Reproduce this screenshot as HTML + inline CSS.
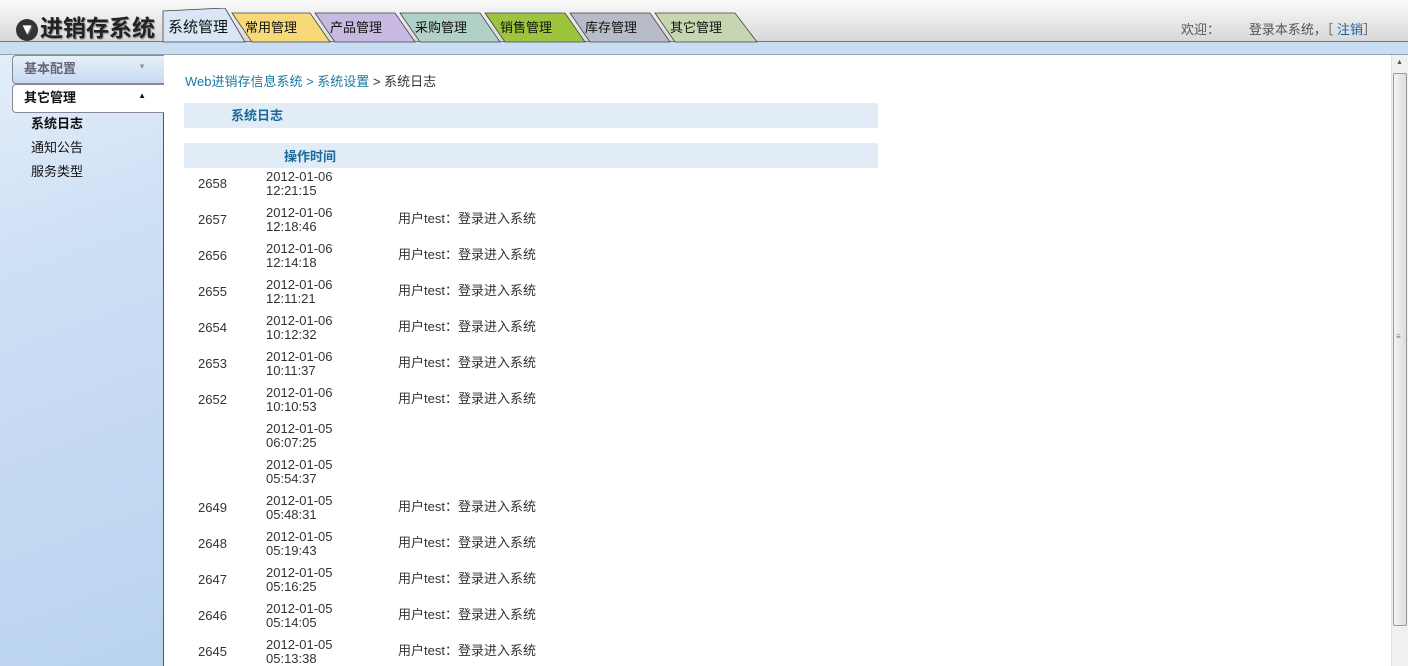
<!DOCTYPE html>
<html><head><meta charset="utf-8"><style>
*{margin:0;padding:0;box-sizing:border-box}
body{width:1408px;height:666px;overflow:hidden;font-family:"Liberation Sans","Noto Sans CJK SC",sans-serif;font-size:13px;color:#333;background:#fff;position:relative}
#top{position:absolute;left:0;top:0;width:1408px;height:42px;background:linear-gradient(#fafafa,#d8d8d8);border-bottom:1px solid #777}
#strip{position:absolute;left:0;top:42px;width:1408px;height:13px;background:#c9def3;border-bottom:1px solid #8aa}
#logo{position:absolute;left:16px;top:9px;font-size:23px;font-weight:bold;color:#222;text-shadow:1px 1px 1px #888}
#logo span{display:inline-block;width:22px;height:22px;border-radius:50%;background:#333;color:#fff;font-size:15px;text-align:center;line-height:22px;vertical-align:2px;margin-right:2px}
.tab{position:absolute;font-size:13px;color:#111}
#welcome{position:absolute;left:1181px;top:19px;font-size:13px;color:#555}
#welcome a{color:#1a5fa0}
#side{position:absolute;left:0;top:55px;width:164px;height:611px;background:linear-gradient(160deg,#e4eefa 0%,#cfe0f5 30%,#b9d3ef 100%);border-right:1px solid #555}
.sh{position:absolute;left:12px;width:152px;height:29px;border:1px solid #889;border-right:none;border-radius:4px 0 0 4px;font-weight:bold;font-size:13px;padding:2px 11px}
.si{position:absolute;left:31px;font-size:13px;color:#111}
#content{position:absolute;left:185px;top:71px}
.bar{position:absolute;left:184px;width:694px;background:#e2ecf7}
.r{position:absolute;font-size:13px;color:#333}
#sb{position:absolute;left:1391px;top:55px;width:17px;height:611px;background:#f0f0f0;border-left:1px solid #ddd}
#sb .th{position:absolute;left:1px;top:18px;width:14px;height:553px;background:linear-gradient(90deg,#f4f4f4,#dcdcdc);border:1px solid #999;border-radius:2px}
</style></head><body>
<div id="top"></div>
<div id="strip"></div>
<div id="logo"><span>▼</span>进销存系统</div>
<svg style="position:absolute;left:160px;top:8px" width="600" height="35">
<polygon points="72,5 150,5 170,34 92,34" fill="#f7d979" stroke="#444" stroke-width="0.8"/>
<polygon points="155,5 235,5 255,34 175,34" fill="#c8b9e2" stroke="#444" stroke-width="0.8"/>
<polygon points="240,5 320,5 340,34 260,34" fill="#b0d0c8" stroke="#444" stroke-width="0.8"/>
<polygon points="325,5 405,5 425,34 345,34" fill="#9cc43c" stroke="#444" stroke-width="0.8"/>
<polygon points="410,5 490,5 510,34 430,34" fill="#b8bcc8" stroke="#444" stroke-width="0.8"/>
<polygon points="495,5 575,5 597,34 515,34" fill="#c6d6b0" stroke="#444" stroke-width="0.8"/>
<polygon points="3,34 3,3 65,0 85,34" fill="#d8e6f5" stroke="#444" stroke-width="0.8"/>
</svg>
<div class="tab" style="left:168px;top:16px;font-size:15px">系统管理</div>
<div class="tab" style="left:245px;top:17px">常用管理</div>
<div class="tab" style="left:330px;top:17px">产品管理</div>
<div class="tab" style="left:415px;top:17px">采购管理</div>
<div class="tab" style="left:500px;top:17px">销售管理</div>
<div class="tab" style="left:585px;top:17px">库存管理</div>
<div class="tab" style="left:670px;top:17px">其它管理</div>
<div id="welcome">欢迎：&nbsp;&nbsp;&nbsp;&nbsp;&nbsp;&nbsp;&nbsp;&nbsp;登录本系统，［ <a>注销</a>］</div>
<div id="side">
<div class="sh" style="top:0;background:linear-gradient(#e8f0fa,#c8daf0);color:#667">基本配置<span style="position:absolute;right:18px;top:6px;font-size:8px;color:#999">▼</span></div>
<div class="sh" style="top:29px;background:#fff;color:#111">其它管理<span style="position:absolute;right:18px;top:6px;font-size:8px">▲</span></div>
<div class="si" style="top:58px;font-weight:bold">系统日志</div>
<div class="si" style="top:82px">通知公告</div>
<div class="si" style="top:106px">服务类型</div>
</div>
<div id="content" style="color:#1a7aa0">Web进销存信息系统 &gt; 系统设置 <span style="color:#333">&gt; 系统日志</span></div>
<div class="bar" style="top:103px;height:25px"></div>
<div class="r" style="left:231px;top:105px;font-weight:bold;color:#1a6a9a">系统日志</div>
<div class="bar" style="top:143px;height:25px"></div>
<div class="r" style="left:284px;top:146px;font-weight:bold;color:#1a6a9a">操作时间</div>
<div id="rows"></div>
<div id="sb"><div style="position:absolute;left:4px;top:4px;font-size:7px;color:#555">▲</div><div class="th"><div style="position:absolute;top:258px;left:2px;font-size:8px;color:#777">≡</div></div></div>
<script>
var d=[["2658","2012-01-06","12:21:15",0],["2657","2012-01-06","12:18:46",1],["2656","2012-01-06","12:14:18",1],["2655","2012-01-06","12:11:21",1],["2654","2012-01-06","10:12:32",1],["2653","2012-01-06","10:11:37",1],["2652","2012-01-06","10:10:53",1],["","2012-01-05","06:07:25",0],["","2012-01-05","05:54:37",0],["2649","2012-01-05","05:48:31",1],["2648","2012-01-05","05:19:43",1],["2647","2012-01-05","05:16:25",1],["2646","2012-01-05","05:14:05",1],["2645","2012-01-05","05:13:38",1]];
var h="";d.forEach(function(x,i){var y=176+i*36;h+='<div class="r" style="left:198px;top:'+y+'px">'+x[0]+'</div><div class="r" style="left:266px;top:'+(y-6)+'px;line-height:14px">'+x[1]+'<br>'+x[2]+'</div>'+(x[3]?'<div class="r" style="left:398px;top:'+(y-4)+'px">用户test：登录进入系统</div>':'');});
document.getElementById("rows").innerHTML=h;
</script>
</body></html>
